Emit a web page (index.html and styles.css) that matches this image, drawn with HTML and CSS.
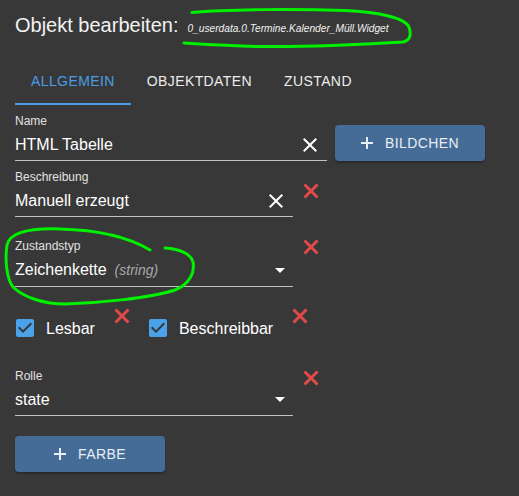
FILE: index.html
```html
<!DOCTYPE html>
<html lang="de">
<head>
<meta charset="utf-8">
<title>Objekt bearbeiten</title>
<link rel="stylesheet" href="styles.css">
</head>
<body>
<div class="page">
  <div class="title">Objekt bearbeiten:<span class="object-id">0_userdata.0.Termine.Kalender_Müll.Widget</span></div>

  <div class="tabs">
    <div class="tab active">Allgemein</div>
    <div class="tab">Objektdaten</div>
    <div class="tab">Zustand</div>
  </div>

  <div class="row row-name">
    <div class="field w-name">
      <div class="field-label">Name</div>
      <div class="field-value">
        <span class="value-text">HTML Tabelle</span>
        <svg class="clear" width="14" height="14" viewBox="5 5 14 14"><path d="M19 6.41L17.59 5 12 10.59 6.41 5 5 6.41 10.59 12 5 17.59 6.41 19 12 13.41 17.59 19 19 17.59 13.41 12z" fill="#fff"/></svg>
      </div>
    </div>
    <div class="btn btn-bild"><svg width="12" height="12" viewBox="0 0 12 12"><path d="M6 0v12M0 6h12" stroke="currentColor" stroke-width="2"/></svg><span>Bildchen</span></div>
  </div>

  <div class="row row-desc">
    <div class="field w-std">
      <div class="field-label">Beschreibung</div>
      <div class="field-value">
        <span class="value-text">Manuell erzeugt</span>
        <svg class="clear" width="14" height="14" viewBox="5 5 14 14"><path d="M19 6.41L17.59 5 12 10.59 6.41 5 5 6.41 10.59 12 5 17.59 6.41 19 12 13.41 17.59 19 19 17.59 13.41 12z" fill="#fff"/></svg>
      </div>
    </div>
    <svg class="del del-desc" width="16" height="16" viewBox="0 0 16 16"><path d="M1.5 1.5L14.5 14.5M14.5 1.5L1.5 14.5" stroke="#e24a4a" stroke-width="3"/></svg>
  </div>

  <div class="row row-type">
    <div class="field w-std">
      <div class="field-label">Zustandstyp</div>
      <div class="field-value">
        <span class="value-text">Zeichenkette<span class="hint">(string)</span></span>
        <svg class="arrow" width="10" height="5" viewBox="7 10 10 5"><path d="M7 10l5 5 5-5z" fill="#fff"/></svg>
      </div>
    </div>
    <svg class="del" width="16" height="16" viewBox="0 0 16 16"><path d="M1.5 1.5L14.5 14.5M14.5 1.5L1.5 14.5" stroke="#e24a4a" stroke-width="3"/></svg>
  </div>

  <div class="row row-checks">
    <div class="check">
      <svg class="box" width="24" height="24" viewBox="0 0 24 24"><path d="M19 3H5c-1.11 0-2 .9-2 2v14c0 1.1.89 2 2 2h14c1.11 0 2-.9 2-2V5c0-1.1-.89-2-2-2zm-9 14l-5-5 1.41-1.41L10 14.17l7.59-7.59L19 8l-9 9z" fill="#4aa3ea"/></svg>
      <span class="check-label">Lesbar</span>
    </div>
    <svg class="del del-check" width="16" height="16" viewBox="0 0 16 16"><path d="M1.5 1.5L14.5 14.5M14.5 1.5L1.5 14.5" stroke="#e24a4a" stroke-width="3"/></svg>
    <div class="check">
      <svg class="box" width="24" height="24" viewBox="0 0 24 24"><path d="M19 3H5c-1.11 0-2 .9-2 2v14c0 1.1.89 2 2 2h14c1.11 0 2-.9 2-2V5c0-1.1-.89-2-2-2zm-9 14l-5-5 1.41-1.41L10 14.17l7.59-7.59L19 8l-9 9z" fill="#4aa3ea"/></svg>
      <span class="check-label">Beschreibbar</span>
    </div>
    <svg class="del del-check" width="16" height="16" viewBox="0 0 16 16"><path d="M1.5 1.5L14.5 14.5M14.5 1.5L1.5 14.5" stroke="#e24a4a" stroke-width="3"/></svg>
  </div>

  <div class="row row-role">
    <div class="field w-std">
      <div class="field-label">Rolle</div>
      <div class="field-value">
        <span class="value-text">state</span>
        <svg class="arrow" width="10" height="5" viewBox="7 10 10 5"><path d="M7 10l5 5 5-5z" fill="#fff"/></svg>
      </div>
    </div>
    <svg class="del del-role" width="16" height="16" viewBox="0 0 16 16"><path d="M1.5 1.5L14.5 14.5M14.5 1.5L1.5 14.5" stroke="#e24a4a" stroke-width="3"/></svg>
  </div>

  <div class="row row-color">
    <div class="btn"><svg width="12" height="12" viewBox="0 0 12 12"><path d="M6 0v12M0 6h12" stroke="currentColor" stroke-width="2"/></svg><span>Farbe</span></div>
  </div>
</div>

<svg class="marks" width="519" height="496" viewBox="0 0 519 496">
  <path d="M192 12.5 C 230 9, 300 9, 345 10.5 C 380 12, 405 18, 409 27 C 412 36, 409 41, 403 42 C 370 44, 300 47, 260 46.5 C 230 46, 200 44, 184 43"/>
  <path d="M150 250 C 130 238, 100 230, 60 229 C 30 228, 10 232, 7 245 C 5 258, 6 280, 14 288 C 25 298, 45 304, 65 304 C 100 303, 150 298, 175 290 C 190 284, 195 272, 193 262 C 191 254, 180 249, 165 248"/>
</svg>
</body>
</html>
```

FILE: styles.css
```css
html, body {
  margin: 0;
  padding: 0;
  background: #383838;
}
body {
  width: 519px;
  height: 496px;
  overflow: hidden;
  position: relative;
  font-family: "Liberation Sans", Arial, sans-serif;
  color: #fff;
}
.page {
  padding: 13px 15px 0;
}
.title {
  font-size: 20px;
  line-height: 24px;
  color: #f2f2f2;
}
.object-id {
  font-size: 10.2px;
  font-style: italic;
  margin-left: 9px;
}
.tabs {
  display: flex;
  margin-top: 16px;
  height: 48px;
}
.tab {
  display: flex;
  align-items: center;
  padding: 0 16px;
  font-size: 14px;
  letter-spacing: 0.02857em;
  text-transform: uppercase;
  color: #ececec;
  box-sizing: border-box;
}
.tab.active {
  color: #4a9fe4;
  border-bottom: 2px solid #4a9fe4;
  padding-top: 2px;
}
.row {
  display: flex;
  align-items: flex-start;
}
.row-name { margin-top: 9px; }
.row-desc { margin-top: 9px; }
.row-type { margin-top: 22px; }
.row-checks { margin-top: 21px; }
.row-role { margin-top: 32px; }
.row-color { margin-top: 20px; }

.field {
  display: flex;
  flex-direction: column;
  border-bottom: 1px solid rgba(255, 255, 255, 0.7);
}
.w-name { width: 312px; }
.w-std { width: 278px; }
.field-label {
  font-size: 12px;
  line-height: 14px;
  color: #e2e2e2;
}
.field-value {
  display: flex;
  align-items: center;
  padding: 7px 0 6px;
  font-size: 16px;
  line-height: 19px;
}
.value-text {
  flex: 1;
  white-space: nowrap;
}
.hint {
  font-size: 14px;
  font-style: italic;
  color: #a8a8a8;
  margin-left: 8px;
}
.clear {
  margin-right: 10px;
}
.arrow {
  margin-right: 8px;
}
.del {
  margin-left: 10px;
  flex: none;
}
.del-desc { margin-top: 13px; }
.del-role { margin-top: 1px; }

.btn {
  display: flex;
  align-items: center;
  justify-content: center;
  gap: 12px;
  width: 150px;
  height: 36px;
  border-radius: 4px;
  background: #456c97;
  color: #e9eef4;
  font-size: 14px;
  letter-spacing: 0.02857em;
  text-transform: uppercase;
  box-shadow: 0 2px 2px rgba(0, 0, 0, 0.25);
}
.btn-bild {
  margin-left: 8px;
  margin-top: 11px;
}

.row-checks {
  height: 29px;
}
.check {
  display: flex;
  align-items: center;
  margin-top: 8px;
  height: 24px;
}
.box {
  margin-left: -2px;
}
.check-label {
  margin-left: 9px;
  font-size: 16px;
  line-height: 19px;
}
.del-check {
  margin-left: 19px;
  margin-right: 18px;
}

.marks {
  position: absolute;
  left: 0;
  top: 0;
  pointer-events: none;
}
.marks path {
  fill: none;
  stroke: #00f000;
  stroke-width: 3;
  stroke-linecap: round;
}
```
